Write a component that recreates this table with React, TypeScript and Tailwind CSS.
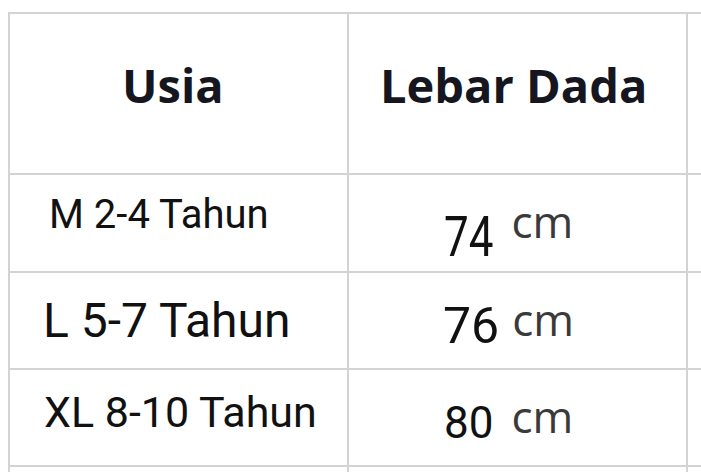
import React from "react";

const roboto = { fontFamily: "Roboto, 'Liberation Sans', sans-serif" };
const open = { fontFamily: "'Open Sans', 'Noto Sans', sans-serif" };

export default function App() {
  return (
    <div className="w-[701px] h-[472px] overflow-hidden bg-white pl-[8px] pt-[12px]">
      <div className="grid w-max grid-cols-[337px_337px_100px] grid-rows-[159px_96px_95px_95px_40px] gap-[2px] bg-[#d3d3d3] p-[2px]">
        {/* header */}
        <div className="bg-white pl-[112px] pt-[48px]">
          <span className="block text-[47px] font-bold leading-none text-[#16161f]" style={open}>Usia</span>
        </div>
        <div className="bg-white pl-[31px] pt-[48px]">
          <span className="block text-[47px] font-bold leading-none text-[#16161f]" style={open}>Lebar Dada</span>
        </div>
        <div className="bg-white" />

        {/* row 1 */}
        <div className="bg-white pl-[39px] pt-[20px]">
          <span className="block text-[40px] leading-none text-[#111]" style={roboto}>M 2-4 Tahun</span>
        </div>
        <div className="flex items-start bg-white pl-[95px]">
          <span className="mt-[40px] inline-block scale-y-[1.28] text-[44px] leading-none text-[#111]" style={roboto}>74</span>
          <span className="ml-[18px] mt-[24px] inline-block text-[44px] leading-none text-[#3a3a3a]" style={open}>cm</span>
        </div>
        <div className="bg-white" />

        {/* row 2 */}
        <div className="bg-white pl-[33px] pt-[24px]">
          <span className="block text-[48px] leading-none text-[#111]" style={roboto}>L 5-7 Tahun</span>
        </div>
        <div className="flex items-start bg-white pl-[94px]">
          <span className="mt-[28px] inline-block text-[50px] leading-none text-[#111]" style={roboto}>76</span>
          <span className="ml-[13px] mt-[24px] inline-block text-[44px] leading-none text-[#3a3a3a]" style={open}>cm</span>
        </div>
        <div className="bg-white" />

        {/* row 3 */}
        <div className="bg-white pl-[34px] pt-[21px]">
          <span className="block text-[43px] leading-none text-[#111]" style={roboto}>XL 8-10 Tahun</span>
        </div>
        <div className="flex items-start bg-white pl-[95px]">
          <span className="mt-[31px] inline-block text-[44px] leading-none text-[#111]" style={roboto}>80</span>
          <span className="ml-[18px] mt-[24px] inline-block text-[44px] leading-none text-[#3a3a3a]" style={open}>cm</span>
        </div>
        <div className="bg-white" />

        {/* row 4 */}
        <div className="bg-white" />
        <div className="bg-white" />
        <div className="bg-white" />
      </div>
    </div>
  );
}
